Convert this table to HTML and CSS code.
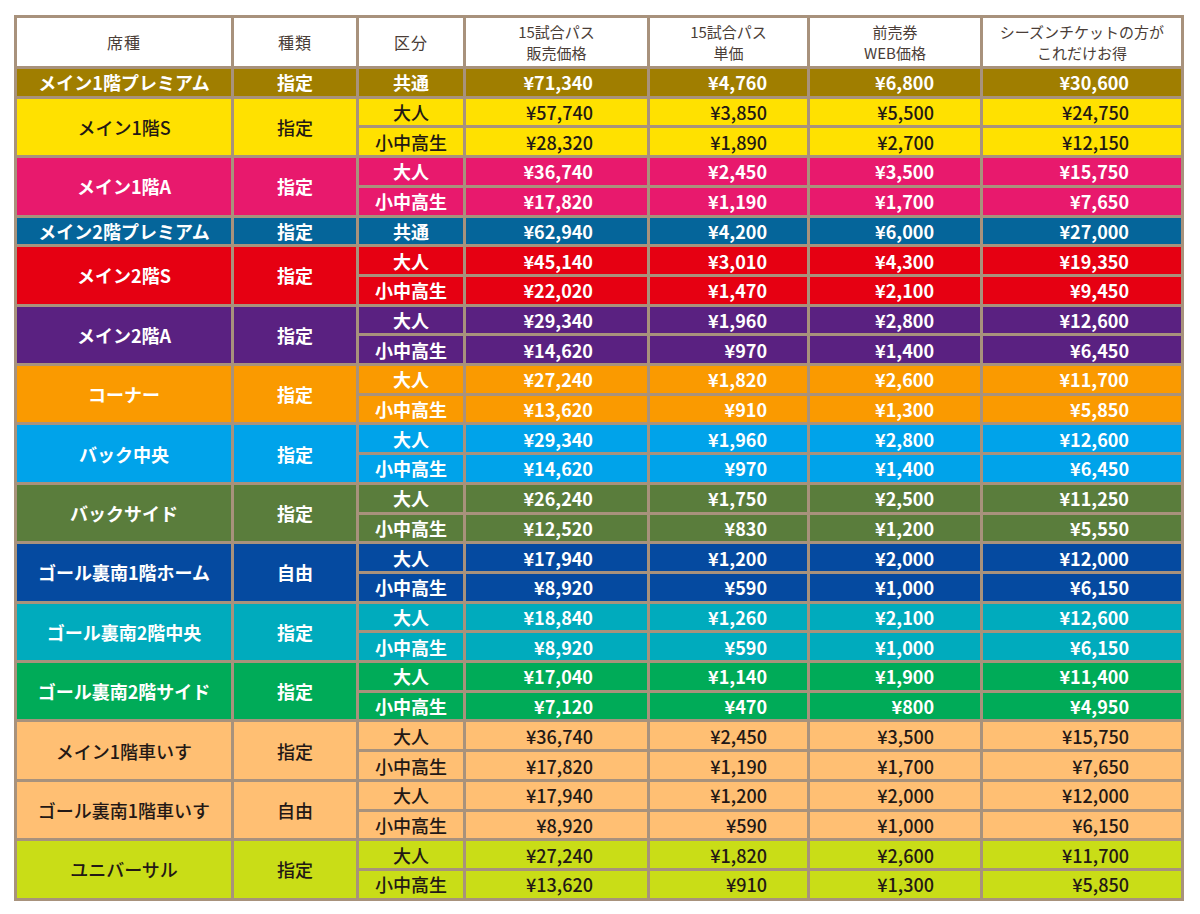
FILE: index.html
```html
<!DOCTYPE html>
<html lang="ja">
<head>
<meta charset="utf-8">
<title>シーズンチケット価格表</title>
<link rel="stylesheet" href="styles.css">
</head>
<body>
<table class="price-table">
  <colgroup>
    <col class="c-seat"><col class="c-type"><col class="c-cat"><col class="c-p1"><col class="c-p2"><col class="c-p3"><col class="c-p4">
  </colgroup>
  <thead>
    <tr class="head-row">
      <th class="h-big">席種</th><th class="h-big">種類</th><th class="h-big">区分</th>
      <th>15試合パス<br>販売価格</th>
      <th>15試合パス<br>単価</th>
      <th>前売券<br>WEB価格</th>
      <th>シーズンチケットの方が<br>これだけお得</th>
    </tr>
  </thead>
  <tbody class="g-gold light-text">
    <tr><td>メイン1階プレミアム</td><td>指定</td><td>共通</td><td class="p1">¥71,340</td><td class="p2">¥4,760</td><td class="p3">¥6,800</td><td class="p4">¥30,600</td></tr>
  </tbody>
  <tbody class="g-yellow dark-text">
    <tr><td rowspan="2">メイン1階S</td><td rowspan="2">指定</td><td>大人</td><td class="p1">¥57,740</td><td class="p2">¥3,850</td><td class="p3">¥5,500</td><td class="p4">¥24,750</td></tr>
    <tr><td>小中高生</td><td class="p1">¥28,320</td><td class="p2">¥1,890</td><td class="p3">¥2,700</td><td class="p4">¥12,150</td></tr>
  </tbody>
  <tbody class="g-pink light-text">
    <tr><td rowspan="2">メイン1階A</td><td rowspan="2">指定</td><td>大人</td><td class="p1">¥36,740</td><td class="p2">¥2,450</td><td class="p3">¥3,500</td><td class="p4">¥15,750</td></tr>
    <tr><td>小中高生</td><td class="p1">¥17,820</td><td class="p2">¥1,190</td><td class="p3">¥1,700</td><td class="p4">¥7,650</td></tr>
  </tbody>
  <tbody class="g-steel light-text">
    <tr><td>メイン2階プレミアム</td><td>指定</td><td>共通</td><td class="p1">¥62,940</td><td class="p2">¥4,200</td><td class="p3">¥6,000</td><td class="p4">¥27,000</td></tr>
  </tbody>
  <tbody class="g-red light-text">
    <tr><td rowspan="2">メイン2階S</td><td rowspan="2">指定</td><td>大人</td><td class="p1">¥45,140</td><td class="p2">¥3,010</td><td class="p3">¥4,300</td><td class="p4">¥19,350</td></tr>
    <tr><td>小中高生</td><td class="p1">¥22,020</td><td class="p2">¥1,470</td><td class="p3">¥2,100</td><td class="p4">¥9,450</td></tr>
  </tbody>
  <tbody class="g-purple light-text">
    <tr><td rowspan="2">メイン2階A</td><td rowspan="2">指定</td><td>大人</td><td class="p1">¥29,340</td><td class="p2">¥1,960</td><td class="p3">¥2,800</td><td class="p4">¥12,600</td></tr>
    <tr><td>小中高生</td><td class="p1">¥14,620</td><td class="p2">¥970</td><td class="p3">¥1,400</td><td class="p4">¥6,450</td></tr>
  </tbody>
  <tbody class="g-orange light-text">
    <tr><td rowspan="2">コーナー</td><td rowspan="2">指定</td><td>大人</td><td class="p1">¥27,240</td><td class="p2">¥1,820</td><td class="p3">¥2,600</td><td class="p4">¥11,700</td></tr>
    <tr><td>小中高生</td><td class="p1">¥13,620</td><td class="p2">¥910</td><td class="p3">¥1,300</td><td class="p4">¥5,850</td></tr>
  </tbody>
  <tbody class="g-sky light-text">
    <tr><td rowspan="2">バック中央</td><td rowspan="2">指定</td><td>大人</td><td class="p1">¥29,340</td><td class="p2">¥1,960</td><td class="p3">¥2,800</td><td class="p4">¥12,600</td></tr>
    <tr><td>小中高生</td><td class="p1">¥14,620</td><td class="p2">¥970</td><td class="p3">¥1,400</td><td class="p4">¥6,450</td></tr>
  </tbody>
  <tbody class="g-moss light-text">
    <tr><td rowspan="2">バックサイド</td><td rowspan="2">指定</td><td>大人</td><td class="p1">¥26,240</td><td class="p2">¥1,750</td><td class="p3">¥2,500</td><td class="p4">¥11,250</td></tr>
    <tr><td>小中高生</td><td class="p1">¥12,520</td><td class="p2">¥830</td><td class="p3">¥1,200</td><td class="p4">¥5,550</td></tr>
  </tbody>
  <tbody class="g-navy light-text">
    <tr><td rowspan="2">ゴール裏南1階ホーム</td><td rowspan="2">自由</td><td>大人</td><td class="p1">¥17,940</td><td class="p2">¥1,200</td><td class="p3">¥2,000</td><td class="p4">¥12,000</td></tr>
    <tr><td>小中高生</td><td class="p1">¥8,920</td><td class="p2">¥590</td><td class="p3">¥1,000</td><td class="p4">¥6,150</td></tr>
  </tbody>
  <tbody class="g-teal light-text">
    <tr><td rowspan="2">ゴール裏南2階中央</td><td rowspan="2">指定</td><td>大人</td><td class="p1">¥18,840</td><td class="p2">¥1,260</td><td class="p3">¥2,100</td><td class="p4">¥12,600</td></tr>
    <tr><td>小中高生</td><td class="p1">¥8,920</td><td class="p2">¥590</td><td class="p3">¥1,000</td><td class="p4">¥6,150</td></tr>
  </tbody>
  <tbody class="g-green light-text">
    <tr><td rowspan="2">ゴール裏南2階サイド</td><td rowspan="2">指定</td><td>大人</td><td class="p1">¥17,040</td><td class="p2">¥1,140</td><td class="p3">¥1,900</td><td class="p4">¥11,400</td></tr>
    <tr><td>小中高生</td><td class="p1">¥7,120</td><td class="p2">¥470</td><td class="p3">¥800</td><td class="p4">¥4,950</td></tr>
  </tbody>
  <tbody class="g-peach dark-text">
    <tr><td rowspan="2">メイン1階車いす</td><td rowspan="2">指定</td><td>大人</td><td class="p1">¥36,740</td><td class="p2">¥2,450</td><td class="p3">¥3,500</td><td class="p4">¥15,750</td></tr>
    <tr><td>小中高生</td><td class="p1">¥17,820</td><td class="p2">¥1,190</td><td class="p3">¥1,700</td><td class="p4">¥7,650</td></tr>
  </tbody>
  <tbody class="g-peach dark-text">
    <tr><td rowspan="2">ゴール裏南1階車いす</td><td rowspan="2">自由</td><td>大人</td><td class="p1">¥17,940</td><td class="p2">¥1,200</td><td class="p3">¥2,000</td><td class="p4">¥12,000</td></tr>
    <tr><td>小中高生</td><td class="p1">¥8,920</td><td class="p2">¥590</td><td class="p3">¥1,000</td><td class="p4">¥6,150</td></tr>
  </tbody>
  <tbody class="g-lime dark-text">
    <tr><td rowspan="2">ユニバーサル</td><td rowspan="2">指定</td><td>大人</td><td class="p1">¥27,240</td><td class="p2">¥1,820</td><td class="p3">¥2,600</td><td class="p4">¥11,700</td></tr>
    <tr><td>小中高生</td><td class="p1">¥13,620</td><td class="p2">¥910</td><td class="p3">¥1,300</td><td class="p4">¥5,850</td></tr>
  </tbody>
</table>
</body>
</html>
```

FILE: styles.css
```css
html, body {
  margin: 0;
  padding: 0;
  background: #ffffff;
}

body {
  padding: 15px 0 0 14px;
  font-family: "Noto Sans CJK JP", "Noto Sans", sans-serif;
}

.price-table {
  border-collapse: collapse;
  table-layout: fixed;
  width: 1167px;
  border: 3px solid #a8927c;
}

.c-seat { width: 217px; }
.c-type { width: 125px; }
.c-cat  { width: 107px; }
.c-p1   { width: 184px; }
.c-p2   { width: 160px; }
.c-p3   { width: 173px; }
.c-p4   { width: 201px; }

.price-table th,
.price-table td {
  border: 3px solid #a8927c;
  padding: 0;
  text-align: center;
  vertical-align: middle;
  white-space: nowrap;
}

.head-row {
  height: 51px;
}

.head-row th {
  background: #ffffff;
  color: #4a3d37;
  font-size: 15px;
  font-weight: 400;
  line-height: 21px;
}

.head-row th.h-big {
  font-size: 16px;
  letter-spacing: 1px;
}

.price-table tbody tr {
  height: 29.71px;
}

.price-table td {
  font-size: 18px;
  line-height: 1;
}

.price-table td.p1 { text-align: right; padding-right: 54px; }
.price-table td.p2 { text-align: right; padding-right: 40px; }
.price-table td.p3 { text-align: right; padding-right: 46px; }
.price-table td.p4 { text-align: right; padding-right: 52px; }

.light-text td {
  color: #ffffff;
  font-weight: 700;
}

.dark-text td {
  color: #231815;
  font-weight: 500;
}

.g-gold td   { background: #a07e00; }
.g-yellow td { background: #ffe100; }
.g-pink td   { background: #e8196d; }
.g-steel td  { background: #05659a; }
.g-red td    { background: #e60012; }
.g-purple td { background: #5a2181; }
.g-orange td { background: #fa9a00; }
.g-sky td    { background: #00a3ea; }
.g-moss td   { background: #5a7d3c; }
.g-navy td   { background: #054aa0; }
.g-teal td   { background: #00abbd; }
.g-green td  { background: #00ab58; }
.g-peach td  { background: #ffbf73; }
.g-lime td   { background: #c9dd17; }
```
